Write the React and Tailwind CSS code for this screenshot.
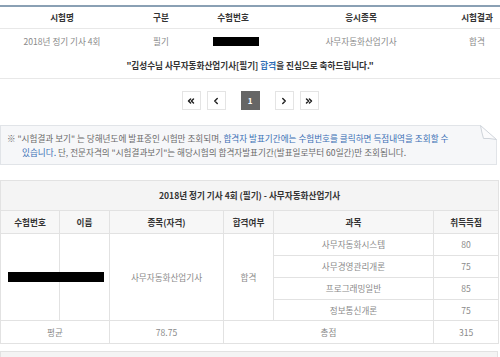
import { ChevronsLeft, ChevronLeft, ChevronRight, ChevronsRight } from 'lucide-react'

const subjects = [
  ['사무자동화시스템', '80'],
  ['사무경영관리개론', '75'],
  ['프로그래밍일반', '85'],
  ['정보통신개론', '75'],
]

function PageButton({ children, active, className = '' }) {
  return (
    <div
      className={`w-[19px] h-[19px] flex items-center justify-center border text-[8px] font-bold ${
        active ? 'bg-[#666] border-[#666] text-white' : 'bg-white border-[#e4e4e4] text-[#222]'
      } ${className}`}
    >
      {children}
    </div>
  )
}

export default function App() {
  return (
    <div className="w-[500px] h-[357px] overflow-hidden bg-white pt-[5px] font-['Noto_Sans_CJK_KR','Noto_Sans',sans-serif] text-[8.6px] text-[#8a8a8a]">
      {/* 시험 결과 목록 */}
      <div className="border-t-2 border-[#8aa0b4]">
        <div className="grid grid-cols-[124px_74px_70px_186px_46px] h-[22px] items-center border-b border-[#e8e8e8] font-bold text-[#333]">
          <span className="text-center">시험명</span>
          <span className="text-center">구분</span>
          <span className="text-center">수험번호</span>
          <span className="text-center">응시종목</span>
          <span className="flex justify-center whitespace-nowrap">시험결과</span>
        </div>
        <div className="grid grid-cols-[124px_74px_70px_186px_46px] h-[24px] items-center">
          <span className="text-center">2018년 정기 기사 4회</span>
          <span className="text-center">필기</span>
          <span className="flex">
            <span className="ml-[15px] w-[46px] h-[9px] bg-black" />
          </span>
          <span className="text-center">사무자동화산업기사</span>
          <span className="text-center">합격</span>
        </div>
        <p className="h-[26px] flex items-center justify-center border-b border-[#e8e8e8] font-bold text-[#333] whitespace-pre">
          "김성수님 사무자동화산업기사[필기] <span className="text-[#2f6db5]">합격</span>을 진심으로 축하드립니다."
        </p>
      </div>

      {/* 페이지 이동 */}
      <div className="flex justify-center pt-[12px] pb-[15px]">
        <PageButton><ChevronsLeft size={10} strokeWidth={3.5} /></PageButton>
        <PageButton className="ml-[6px]"><ChevronLeft size={10} strokeWidth={3.5} /></PageButton>
        <PageButton active className="mx-[15px]">1</PageButton>
        <PageButton><ChevronRight size={10} strokeWidth={3.5} /></PageButton>
        <PageButton className="ml-[6px]"><ChevronsRight size={10} strokeWidth={3.5} /></PageButton>
      </div>

      {/* 안내 */}
      <div className="relative w-[497px] h-[40px] bg-[#f6f7f9] border border-[#e1e4e8] pt-[5px] pl-[21px] -indent-[15px] leading-[14px] text-[#6a6a6a] whitespace-nowrap">
        ※ "시험결과 보기" 는 당해년도에 발표중인 시험만 조회되며,{' '}
        <span className="text-[#3a6fb5]">합격자 발표기간에는 수험번호를 클릭하면 득점내역을 조회할 수</span>
        <br />
        <span className="text-[#3a6fb5]">있습니다.</span> 단, 전문자격의 "시험결과보기"는 해당시험의 합격자발표기간(발표일로부터 60일간)만 조회됩니다.
        <svg className="absolute -right-px -top-px" width="17" height="15" viewBox="0 0 17 15">
          <polygon points="0,0 17,0 17,15" fill="#ffffff" />
          <path d="M0.5 0.5 L16.5 14.5 Q8 13 3.5 13.5 Q1.5 7 0.5 0.5Z" fill="#fbfbfc" stroke="#cfd4da" strokeWidth="1" />
        </svg>
      </div>

      {/* 득점 내역 */}
      <table className="mt-[15px] w-[498px] table-fixed border-collapse border border-[#e2e2e2]">
        <colgroup>
          <col className="w-[59px]" />
          <col className="w-[50px]" />
          <col className="w-[114px]" />
          <col className="w-[50px]" />
          <col className="w-[160px]" />
          <col className="w-[65px]" />
        </colgroup>
        <thead className="text-[#333] font-bold">
          <tr className="h-[30px] bg-[#f4f4f4] border-b border-[#e2e2e2]">
            <th colSpan={6} className="font-bold">2018년 정기 기사 4회 (필기) - 사무자동화산업기사</th>
          </tr>
          <tr className="h-[23px] bg-[#f7f7f7]">
            <th className="font-bold border border-[#e2e2e2]">수험번호</th>
            <th className="font-bold border border-[#e2e2e2]">이름</th>
            <th className="font-bold border border-[#e2e2e2]">종목(자격)</th>
            <th className="font-bold border border-[#e2e2e2]">합격여부</th>
            <th className="font-bold border border-[#e2e2e2]">과목</th>
            <th className="font-bold border border-[#e2e2e2]">취득득점</th>
          </tr>
        </thead>
        <tbody>
          {subjects.map(([name, score], i) => (
            <tr key={name} className={i === 3 ? 'h-[21px]' : 'h-[22px]'}>
              {i === 0 && (
                <>
                  <td rowSpan={4} className="border border-[#e2e2e2] p-0">
                    <div className="relative z-10 ml-[7px] w-[96px] h-[10px] bg-black" />
                  </td>
                  <td rowSpan={4} className="border border-[#e2e2e2]" />
                  <td rowSpan={4} className="border border-[#e2e2e2] text-center">사무자동화산업기사</td>
                  <td rowSpan={4} className="border border-[#e2e2e2] text-center">합격</td>
                </>
              )}
              <td className="border border-[#e2e2e2] text-center">{name}</td>
              <td className="border border-[#e2e2e2] text-center">{score}</td>
            </tr>
          ))}
          <tr className="h-[23px]">
            <td colSpan={2} className="border border-[#e2e2e2] text-center">평균</td>
            <td className="border border-[#e2e2e2] text-center">78.75</td>
            <td colSpan={2} className="border border-[#e2e2e2] text-center">총점</td>
            <td className="border border-[#e2e2e2] text-center">315</td>
          </tr>
        </tbody>
      </table>

      <div className="mt-[7px] w-[498px] h-[20px] bg-[#f4f4f4] border border-[#e2e2e2]" />
    </div>
  )
}
